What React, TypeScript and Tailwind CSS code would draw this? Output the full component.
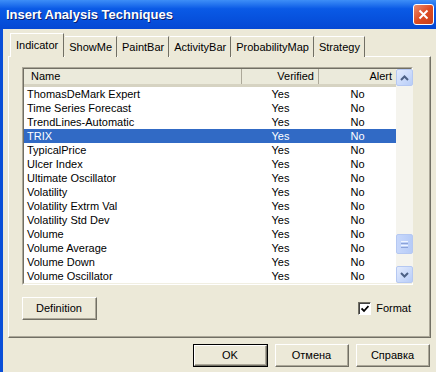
import React from "react";

const rows: [string, string, string][] = [
  ["ThomasDeMark Expert", "Yes", "No"],
  ["Time Series Forecast", "Yes", "No"],
  ["TrendLines-Automatic", "Yes", "No"],
  ["TRIX", "Yes", "No"],
  ["TypicalPrice", "Yes", "No"],
  ["Ulcer Index", "Yes", "No"],
  ["Ultimate Oscillator", "Yes", "No"],
  ["Volatility", "Yes", "No"],
  ["Volatility Extrm Val", "Yes", "No"],
  ["Volatility Std Dev", "Yes", "No"],
  ["Volume", "Yes", "No"],
  ["Volume Average", "Yes", "No"],
  ["Volume Down", "Yes", "No"],
  ["Volume Oscillator", "Yes", "No"],
];

const tabs = ["ShowMe", "PaintBar", "ActivityBar", "ProbabilityMap", "Strategy"];

function Button({ label, isDefault, w }: { label: string; isDefault?: boolean; w: string }) {
  return (
    <div className={`${w} h-[23px] ${isDefault ? "border border-black" : ""}`}>
      <div className="w-full h-full border-t border-l border-white border-r border-b border-r-[#716f64] border-b-[#716f64]">
        <div className="w-full h-full border-r border-b border-[#aca899] flex items-center justify-center text-black">
          {label}
        </div>
      </div>
    </div>
  );
}

function ScrollArrow({ up }: { up?: boolean }) {
  return (
    <div className="h-[17px] w-[17px] rounded-[2px] border border-[#b5c8f2] bg-linear-to-br from-[#e3ebfd] to-[#b8cdf8] flex items-center justify-center">
      <svg width="9" height="6" viewBox="0 0 9 6">
        <path
          d={up ? "M1 5 L4.5 1.5 L8 5" : "M1 1 L4.5 4.5 L8 1"}
          fill="none"
          stroke="#4d6185"
          strokeWidth="2"
        />
      </svg>
    </div>
  );
}

export default function App() {
  return (
    <div
      className="w-[436px] h-[372px] flex flex-col bg-[#0a4fd8] overflow-hidden text-[11px] leading-none"
      style={{ fontFamily: '"Liberation Sans", Arial, sans-serif' }}
    >
      {/* Title bar */}
      <div className="h-[29px] shrink-0 flex items-center justify-between pl-[6px] pr-[2px] bg-linear-to-b from-[#3d8ef7] via-[#0a5ae6] via-30% to-[#0548d4]">
        <span className="text-white font-bold text-[13px] [text-shadow:1px_1px_0_#0a1e6e]">
          Insert Analysis Techniques
        </span>
        <div className="w-[21px] h-[21px] rounded-[3px] border border-white bg-linear-to-br from-[#e98a6c] via-[#dd4b22] to-[#c8401c] flex items-center justify-center">
          <svg width="11" height="11" viewBox="0 0 11 11">
            <path d="M1.5 1.5 L9.5 9.5 M9.5 1.5 L1.5 9.5" stroke="white" strokeWidth="2" />
          </svg>
        </div>
      </div>

      {/* Body */}
      <div className="flex-1 ml-[3px] bg-[#ece9d8] flex flex-col px-[5px] pt-[4px]">
        {/* Tabs */}
        <div className="flex items-end h-[24px] relative z-10 mb-[-1px]">
          <div className="h-[24px] px-[5px] pt-[6px] ml-[2px] bg-[#ece9d8] border-l border-t border-white border-r border-r-[#716f64] text-black">
            Indicator
          </div>
          {tabs.map((t) => (
            <div
              key={t}
              className="h-[21px] px-[4px] pt-[5px] ml-[1px] bg-[#ece9d8] border-t border-white border-r border-r-[#716f64] text-black"
            >
              {t}
            </div>
          ))}
        </div>

        {/* Tab panel */}
        <div className="w-[423px] h-[282px] border-t border-l border-white border-r border-b border-r-[#716f64] border-b-[#716f64] flex flex-col">
          <div className="flex-1 border-r border-b border-[#aca899] flex flex-col px-[13px] pt-[10px]">
            {/* List view */}
            <div className="w-[391px] h-[218px] border-t border-l border-[#aca899] border-r border-b border-r-white border-b-white">
              <div className="w-full h-full border-t border-l border-[#716f64] border-r border-b border-r-[#f1efe2] border-b-[#f1efe2] bg-white flex">
                <div className="w-[372px] flex flex-col">
                  <div className="h-[18px] shrink-0 flex bg-[#ebeadb] border-b-[3px] border-[#d6d3c2] text-black">
                    <div className="w-[218px] pl-[7px] flex items-center border-r border-[#aca899]">Name</div>
                    <div className="w-[77px] pr-[4px] flex items-center justify-end border-r border-[#aca899]">Verified</div>
                    <div className="w-[77px] pr-[4px] flex items-center justify-end">Alert</div>
                  </div>
                  {rows.map(([name, v, a], i) => {
                    const sel = name === "TRIX";
                    return (
                      <div
                        key={i}
                        className={`h-[14px] flex items-center ${sel ? "bg-[#316ac5] text-white" : "text-black"}`}
                      >
                        <div className="w-[218px] pl-[3px]">{name}</div>
                        <div className="w-[77px] text-center">{v}</div>
                        <div className="w-[77px] text-center">{a}</div>
                      </div>
                    );
                  })}
                </div>
                {/* Scrollbar */}
                <div className="w-[17px] flex flex-col bg-[#f5f4ee]">
                  <ScrollArrow up />
                  <div className="flex-1 flex flex-col justify-end pb-[12px]">
                    <div className="h-[20px] rounded-[2px] border border-[#b5c8f2] bg-linear-to-r from-[#c8d8fb] to-[#b6cbf7] flex flex-col items-center justify-center gap-[1px]">
                      <div className="w-[7px] h-[1px] bg-[#eef4fe]" />
                      <div className="w-[7px] h-[1px] bg-[#8ca3d8]" />
                      <div className="w-[7px] h-[1px] bg-[#eef4fe]" />
                      <div className="w-[7px] h-[1px] bg-[#8ca3d8]" />
                    </div>
                  </div>
                  <ScrollArrow />
                </div>
              </div>
            </div>

            {/* Definition + Format */}
            <div className="flex items-center justify-between mt-[12px] pr-[5px]">
              <Button label="Definition" w="w-[75px]" />
              <div className="flex items-center gap-[5px] text-black">
                <div className="w-[13px] h-[13px] border-t border-l border-[#716f64] border-r border-b border-r-white border-b-white">
                  <div className="w-full h-full border-t border-l border-[#404040] bg-white flex items-center justify-center">
                    <svg width="8" height="8" viewBox="0 0 8 8">
                      <path d="M0.5 3.5 L3 6 L7.5 1" fill="none" stroke="black" strokeWidth="1.8" />
                    </svg>
                  </div>
                </div>
                <span>Format</span>
              </div>
            </div>
          </div>
        </div>

        {/* Bottom buttons */}
        <div className="flex justify-end gap-[7px] mt-[6px] pr-[1px]">
          <Button label="OK" isDefault w="w-[75px]" />
          <Button label="Отмена" w="w-[74px]" />
          <Button label="Справка" w="w-[74px]" />
        </div>
      </div>
    </div>
  );
}
